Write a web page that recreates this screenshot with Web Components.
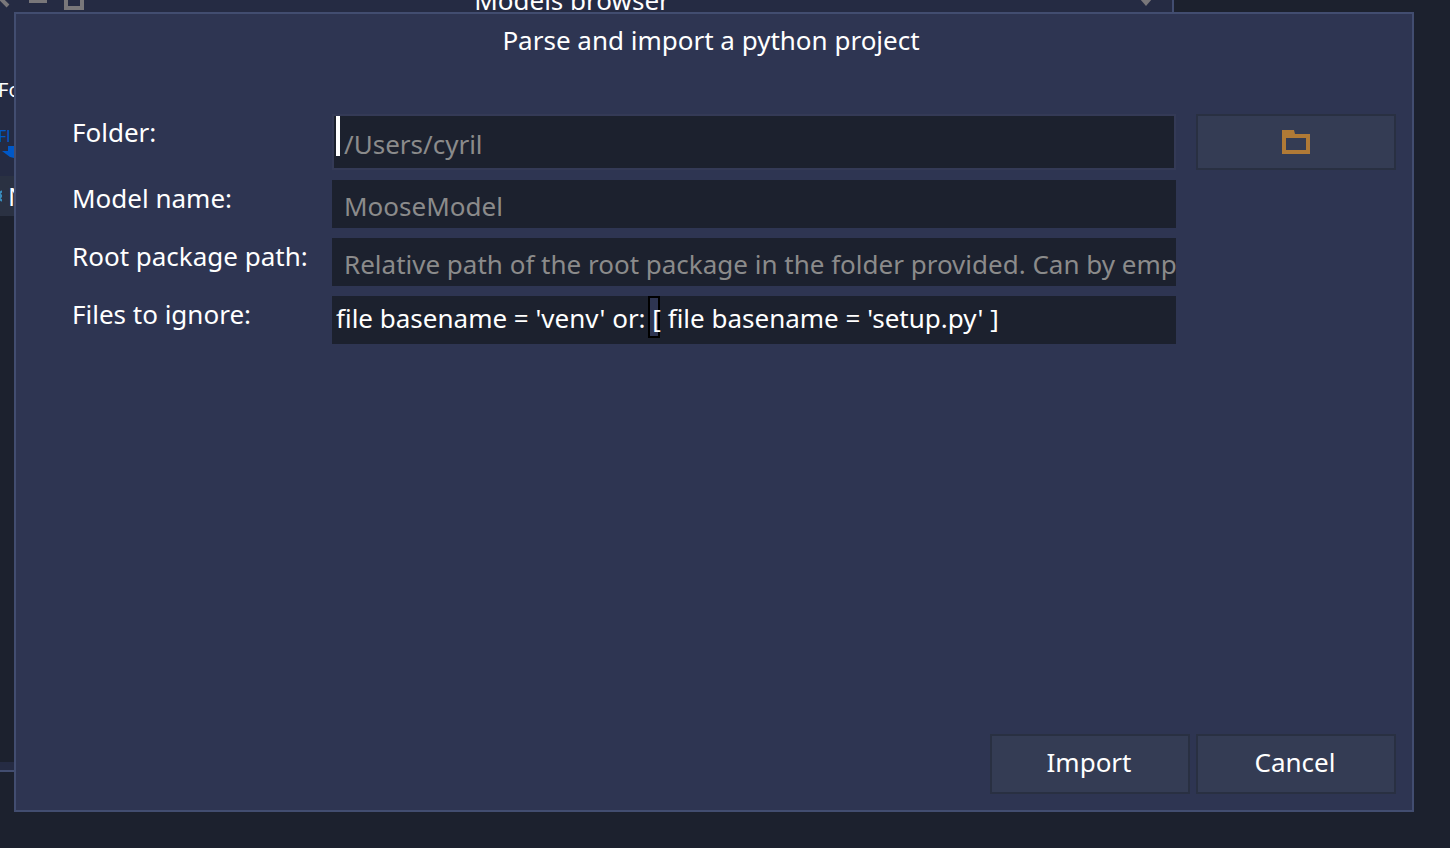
<!DOCTYPE html>
<html lang="en">
<head>
<meta charset="utf-8">
<title>Parse and import a python project</title>
<style>
  html, body { height: 100%; }
  body { margin: 0; background: #1c212e; color: #fff; font: 26px/36px "Noto Sans", sans-serif; overflow: hidden; }
</style>
</head>
<body>
<desk-top>
  <models-window heading="Models browser"></models-window>
  <import-dialog heading="Parse and import a python project">
    <form-row label="Folder:" placeholder="/Users/cyril" active>
      <action-button slot="action" label="Choose folder"><folder-icon></folder-icon></action-button>
    </form-row>
    <form-row label="Model name:" placeholder="MooseModel"></form-row>
    <form-row label="Root package path:" placeholder="Relative path of the root package in the folder provided. Can by empty."></form-row>
    <form-row label="Files to ignore:" value="file basename = 'venv' or: [ file basename = 'setup.py' ]" bracket></form-row>
    <action-button slot="footer" tall>Import</action-button>
    <action-button slot="footer" tall>Cancel</action-button>
  </import-dialog>
</desk-top>
<script>
class BaseElement extends HTMLElement {
  connectedCallback() {
    if (this.shadowRoot) return;
    this.attachShadow({ mode: "open" }).innerHTML =
      `<style>*{box-sizing:border-box}</style>` + this.render();
  }
  attr(name) { return (this.getAttribute(name) || "").replace(/&/g, "&amp;").replace(/"/g, "&quot;"); }
}

customElements.define("desk-top", class extends BaseElement {
  render() { return `
    <style>:host{display:block;position:relative;height:100%;overflow:hidden}</style>
    <slot></slot>`; }
});

customElements.define("models-window", class extends BaseElement {
  render() { return `
    <style>
      /* A window on the desktop, partly off its top left corner */
      :host{box-sizing:border-box;position:absolute;top:-20px;left:-30px;right:276px;bottom:76px;display:flex;flex-direction:column;
        background:#252b43;border:2px solid #424d70;padding-bottom:8px}
      header{display:grid;grid-template-columns:110px 1fr 110px;height:36px;padding:0 10px}
      header svg{display:block}
      header svg:last-child{justify-self:end;margin-right:6px}
      h1{margin:0;font-size:26px;font-weight:400;line-height:36px;text-align:center}
      main{display:flex;flex-direction:column;flex:1}
      .top{height:158px;padding:58px 0 0 26px;font-size:20px;line-height:28px}
      .top p{margin:0}
      .top .blue{margin-top:22px;font-size:16px;line-height:20px;color:#0058c8}
      .top svg{display:block}
      .row{height:40px;background:#2a3142;display:flex;align-items:center;padding-left:24px;gap:6px}
      .list{flex:1;background:#1c212e}
    </style>
    <header>
      <svg width="110" height="36" viewBox="-18 -18 110 36" fill="none" stroke="#79777a" stroke-width="4"><path d="M-7 -9L8 6M7 -9L-7 5"/><path d="M29 1H47"/><path d="M66 -10H82V8H66Z"/></svg>
      <h1>${this.attr("heading")}</h1>
      <svg width="18" height="36" viewBox="0 0 18 36" fill="#79777a"><path d="M2 17H14L8 24Z"/></svg>
    </header>
    <main>
      <div class="top"><p>Fo</p><p class="blue">Fl</p>
        <svg width="24" height="14" viewBox="0 0 24 14" fill="#0058c8"><path d="M10 0H24V14L12 11L4 5H10Z"/></svg>
      </div>
      <div class="row"><svg width="6" height="12" viewBox="0 0 6 12" fill="none" stroke="#3a8fc0" stroke-width="2"><path d="M6 1L3 4L6 6L3 8L6 11"/></svg><span>N</span></div>
      <div class="list"></div>
    </main>`; }
});

customElements.define("import-dialog", class extends BaseElement {
  render() { return `
    <style>
      :host{box-sizing:border-box;position:absolute;inset:12px 36px 36px 14px;display:flex;flex-direction:column;
        background:#2e3552;border:2px solid #424d70;padding:0 16px 16px 56px}
      h2{margin:8px 0 56px -46px;font-size:26px;font-weight:400;line-height:36px;text-align:center}
      .rows{display:flex;flex-direction:column;gap:10px;flex:1}
      footer{display:flex;justify-content:flex-end;gap:6px}
    </style>
    <h2>${this.attr("heading")}</h2>
    <div class="rows"><slot></slot></div>
    <footer><slot name="footer"></slot></footer>`; }
});

customElements.define("form-row", class extends BaseElement {
  render() { return `
    <style>
      :host{display:grid;grid-template-columns:260px 1fr 220px;height:48px}
      :host([active]){height:56px}
      .field{position:relative;display:flex;background:#1c212e}
      input{position:relative;flex:1;min-width:0;margin:0;border:0;outline:0;border-radius:0;background:none;color:#fff;font:inherit;padding:0 0 4px 4px}
      input:placeholder-shown{padding:4px 0 0 12px;text-overflow:clip}
      input::placeholder{color:#8b8b8b;opacity:1}
      :host([active]) .field{border:2px solid #343a56}
      :host([active]) input{padding-left:10px}
      .caret{position:absolute;left:2px;top:0;width:4px;height:40px;background:#fff}
      .match{position:absolute;left:316px;top:0;width:12px;height:42px;border:2px solid #000;background:#2e3552}
      .action{padding-left:20px;display:flex}
    </style>
    <label for="field">${this.attr("label")}</label>
    <div class="field">
      ${this.hasAttribute("active") ? '<span class="caret"></span>' : ""}
      ${this.hasAttribute("bracket") ? '<span class="match"></span>' : ""}
      <input id="field" type="text" placeholder="${this.attr("placeholder")}" value="${this.attr("value")}">
    </div>
    <div class="action"><slot name="action"></slot></div>`; }
});

customElements.define("action-button", class extends BaseElement {
  render() { return `
    <style>
      :host{display:flex;width:200px;height:56px}
      :host([tall]){height:60px}
      button{flex:1;display:flex;align-items:center;justify-content:center;margin:0;padding:0;border:2px solid #293042;border-radius:0;
        background:#343c54;color:#fff;font:inherit}
      :host([tall]) button{padding:0 2px 4px 0}
    </style>
    <button type="button" ${this.hasAttribute("label") ? `aria-label="${this.attr("label")}"` : ""}><slot></slot></button>`; }
});

customElements.define("folder-icon", class extends BaseElement {
  render() { return `
    <style>:host{display:block}svg{display:block}</style>
    <svg width="28" height="24" viewBox="0 0 28 24" fill="#b07a36"><path fill-rule="evenodd" d="M0 0H12L13 4H28V24H0ZM4 8V20H24V8Z"/></svg>`; }
});
</script>
</body>
</html>
